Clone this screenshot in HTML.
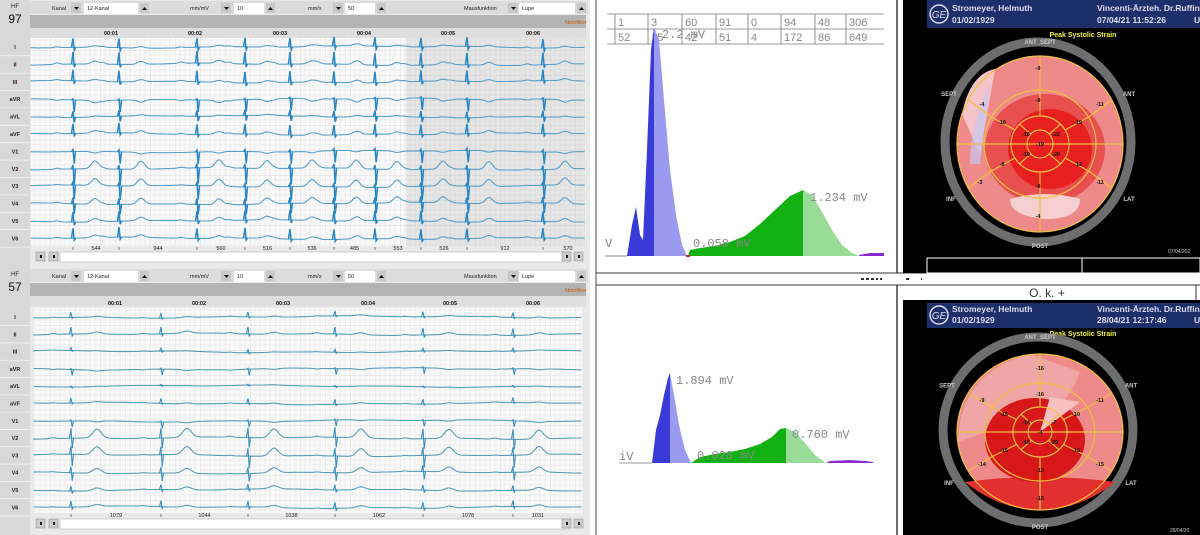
<!DOCTYPE html>
<html><head><meta charset="utf-8">
<style>
html,body{margin:0;padding:0;background:#fff;width:1200px;height:535px;overflow:hidden}
svg{display:block}
text{font-family:"Liberation Sans",sans-serif}
.s{font-size:5.5px;fill:#222}
.m{font-family:"Liberation Mono",monospace;font-size:12px;fill:#888}
.tb{font-family:"Liberation Serif",serif;font-size:11px;fill:#888}
.w{font-size:8.5px;fill:#dde;font-weight:bold}
.lb{font-size:6px;fill:#ccc;font-weight:bold}
.n{font-size:5.5px;fill:#111;font-weight:bold}
</style></head><body>
<svg id="s" width="1200" height="535" viewBox="0 0 1200 535" xmlns="http://www.w3.org/2000/svg">
<defs>
<pattern id="g" width="25" height="25" patternUnits="userSpaceOnUse">
<path d="M5 0V25M10 0V25M15 0V25M20 0V25M0 5H25M0 10H25M0 15H25M0 20H25" stroke="#e4e4e4" stroke-width="0.5"/>
<path d="M0 0V25M0 0H25" stroke="#d2d2d2" stroke-width="0.7"/>
</pattern>
</defs>
<g id="ecg"></g>

<line x1="897" y1="0" x2="897" y2="273" stroke="#222" stroke-width="1.3"/>
<line x1="897" y1="285" x2="897" y2="535" stroke="#222" stroke-width="1.3"/>
<line x1="596" y1="273" x2="1200" y2="273" stroke="#333" stroke-width="1"/>
<line x1="596" y1="285" x2="1200" y2="285" stroke="#333" stroke-width="1"/>
<line x1="1196" y1="285" x2="1196" y2="300" stroke="#333"/>
<line x1="596" y1="0" x2="596" y2="535" stroke="#444" stroke-width="1"/>
<g fill="#333"><rect x="861" y="278" width="3" height="2"/><rect x="866" y="278" width="3" height="2"/><rect x="871" y="278" width="3" height="2"/><rect x="876" y="278" width="2" height="2"/><rect x="880" y="278" width="2" height="2"/><rect x="906" y="278" width="3" height="2"/><rect x="921" y="278" width="1" height="2"/></g>
<text x="1047" y="297" font-size="12" fill="#333" text-anchor="middle" font-family="Liberation Sans">O. k. +</text>

<g stroke="#777" stroke-width="0.8" fill="none">
<path d="M607 14H884M607 29H884M607 44H884"/>
<path d="M615 14V44M648 14V44M682 14V44M716 14V44M748 14V44M781 14V44M815 14V44M846 14V44"/>
</g>
<g class="tb">
<text x="618" y="26">1</text><text x="651" y="26">3</text><text x="685" y="26">60</text><text x="719" y="26">91</text><text x="751" y="26">0</text><text x="784" y="26">94</text><text x="818" y="26">48</text><text x="849" y="26">306</text>
<text x="618" y="41">52</text><text x="651" y="41">15</text><text x="685" y="41">42</text><text x="719" y="41">51</text><text x="751" y="41">4</text><text x="784" y="41">172</text><text x="818" y="41">86</text><text x="849" y="41">649</text>
</g>

<path d="M605 256H627" stroke="#888" stroke-width="1"/>
<path d="M627 256L632 225L636 207L640 235L643 240L647 150L651 50L654 27L654 256Z" fill="#3a3ad8"/>
<path d="M654 27L659 40L664 100L670 170L676 215L682 245L687 256L654 256Z" fill="#9a9af0"/>
<path d="M688 256L690 250L700 248L715 246L730 242L745 236L760 224L775 210L790 196L803 190L803 256Z" fill="#12b012"/>
<path d="M803 190L812 195L822 212L832 230L842 245L852 253L859 256L803 256Z" fill="#98dc98"/>
<path d="M859 255L870 253L884 253L884 256L859 256Z" fill="#8a2ad0"/>
<path d="M686 256H690" stroke="#d02020" stroke-width="2"/>
<text class="m" x="810" y="201">1.234 mV</text>
<text class="m" x="693" y="247">0.058 mV</text>
<text class="m" x="605" y="247">V</text>
<text class="m" x="662" y="38" font-size="10" fill="#aaa">2.2 mV</text>

<path d="M619 463H652" stroke="#999" stroke-width="1"/>
<path d="M652 463L656 430L660 415L664 395L668 378L670 373L670 463Z" fill="#3a3ad8"/>
<path d="M670 373L674 395L679 425L685 450L691 463L670 463Z" fill="#9a9af0"/>
<path d="M691 463L700 457L715 454L730 452L745 449L760 444L772 437L780 429L786 428L786 463Z" fill="#12b012"/>
<path d="M786 428L795 432L805 443L815 455L826 463L786 463Z" fill="#98dc98"/>
<path d="M826 463L830 461L850 460L865 461L873 462L873 463Z" fill="#8a2ad0"/>
<text class="m" x="676" y="384">1.894 mV</text>
<text class="m" x="697" y="459">0.020 mV</text>
<text class="m" x="792" y="438">0.760 mV</text>
<text class="m" x="619" y="460">iV</text>

<rect x="903" y="0" width="297" height="273" fill="#000"/>
<rect x="927" y="0" width="273" height="28" fill="#1c2f6a"/>
<circle cx="939" cy="14" r="9" fill="none" stroke="#dde" stroke-width="1.5"/><text x="939" y="18" font-size="10" fill="#dde" text-anchor="middle" font-style="italic">GE</text>
<text class="w" x="952" y="11">Stromeyer, Helmuth</text><text class="w" x="952" y="23">01/02/1929</text>
<text class="w" x="1097" y="11">Vincenti-Ärzteh. Dr.Ruffin</text><text class="w" x="1097" y="23">07/04/21 11:52:26</text><text class="w" x="1194" y="23">U</text>
<text x="1083" y="37" font-size="7" fill="#f0f040" font-weight="bold" text-anchor="middle">Peak Systolic Strain</text>
<g id="b1"></g>
<text x="1168" y="253" font-size="5" fill="#ccc">07/04/202</text>
<rect x="927" y="258" width="273" height="15" fill="#000" stroke="#fff" stroke-width="1"/>
<line x1="1082" y1="258" x2="1082" y2="273" stroke="#fff"/>

<rect x="903" y="300" width="297" height="235" fill="#000"/>
<rect x="927" y="303" width="273" height="25" fill="#1c2f6a"/>
<circle cx="939" cy="315" r="9" fill="none" stroke="#dde" stroke-width="1.5"/><text x="939" y="319" font-size="10" fill="#dde" text-anchor="middle" font-style="italic">GE</text>
<text class="w" x="952" y="312">Stromeyer, Helmuth</text><text class="w" x="952" y="323">01/02/1929</text>
<text class="w" x="1097" y="312">Vincenti-Ärzteh. Dr.Ruffin</text><text class="w" x="1097" y="323">28/04/21 12:17:46</text><text class="w" x="1194" y="323">U</text>
<text x="1083" y="336" font-size="7" fill="#f0f040" font-weight="bold" text-anchor="middle">Peak Systolic Strain</text>
<g id="b2"></g>
<text x="1170" y="532" font-size="5" fill="#ccc">28/04/20</text>
</svg>
<script>
var NS="http://www.w3.org/2000/svg";
function el(p,t,a,txt){var e=document.createElementNS(NS,t);for(var k in a)e.setAttribute(k,a[k]);if(txt!=null)e.textContent=txt;p.appendChild(e);return e;}
var E=document.getElementById('ecg');
var leads=["I","II","III","aVR","aVL","aVF","V1","V2","V3","V4","V5","V6"];
function panel(o){
 var y0=o.y;
 el(E,'rect',{x:0,y:y0,width:590,height:o.h,fill:'#e9e9e9'});
 el(E,'rect',{x:30,y:y0+1,width:558,height:13,fill:'#dcdcdc'});
 el(E,'rect',{x:30,y:y0+15,width:556,height:13,fill:'#b4b4b4'});
 el(E,'rect',{x:30,y:y0+28,width:556,height:10,fill:'#dedede'});
 el(E,'rect',{x:0,y:y0,width:30,height:o.h,fill:'#d8d8d8'});
 el(E,'text',{x:15,y:y0+8,'font-size':6,'text-anchor':'middle',fill:'#222'},'HF');
 el(E,'text',{x:15,y:y0+23,'font-size':12,'text-anchor':'middle',fill:'#111'},o.hf);
 el(E,'text',{x:565,y:y0+24,'font-size':5.5,fill:'#c06010'},'Netzfilter');
 var tb=[["Kanal",52,71,84,138,140,"12-Kanal"],["mm/mV",190,221,234,264,266,"10"],["mm/s",308,333,345,375,377,"50"],["Mausfunktion",464,508,519,575,577,"Lupe"]];
 tb.forEach(function(t){
  el(E,'text',{x:t[1],y:y0+10,'class':'s'},t[0]);
  el(E,'rect',{x:t[2],y:y0+3,width:10,height:10,fill:'#c8c8c8'});
  el(E,'path',{d:'M'+(t[2]+3)+' '+(y0+7)+'h5l-2.5 3z',fill:'#111'});
  el(E,'rect',{x:t[3],y:y0+3,width:t[4]-t[3],height:11,fill:'#fff'});
  el(E,'text',{x:t[3]+3,y:y0+10,'class':'s'},t[6]);
  el(E,'rect',{x:t[5],y:y0+3,width:9,height:10,fill:'#c8c8c8'});
  el(E,'path',{d:'M'+(t[5]+2)+' '+(y0+10)+'h5l-2.5 -3z',fill:'#111'});
 });
 var gx=o.gx0,gw=o.gx1-o.gx0,gt=y0+o.gt,gh=o.gb-o.gt;
 el(E,'rect',{x:gx,y:gt,width:gw,height:gh,fill:'#fafafa'});
 el(E,'rect',{x:gx,y:gt,width:gw,height:gh,fill:'url(#g)'});
 if(o.shade)el(E,'rect',{x:o.shade,y:gt,width:o.gx1-o.shade,height:gh,fill:'rgba(120,120,120,0.15)'});
 o.times.forEach(function(x,i){el(E,'text',{x:x,y:y0+o.gt-3,'class':'n','text-anchor':'middle'},o.tl[i]);});
 leads.forEach(function(l,i){var ly=y0+o.l0+i*o.ls;
  el(E,'line',{x1:0,x2:30,y1:ly+o.ls/2,y2:ly+o.ls/2,stroke:'#f4f4f4','stroke-width':0.8});
  el(E,'text',{x:15,y:ly+2,'font-size':5.5,'text-anchor':'middle',fill:'#222','font-weight':'bold'},l);});
 leads.forEach(function(l,i){
  var by=y0+o.l0+i*o.ls, P=o.par[i], d='M'+gx+' '+by;
  var beats=o.beats;
  var wob=function(x){return Math.sin(x*0.05+i)*0.5+Math.sin(x*0.013+i*2)*0.8;};
  for(var x=gx;x<=o.gx1;x+=1.5){
   var yy=by+wob(x);
   for(var b=0;b<beats.length;b++){var dx=x-beats[b];
    yy+= -P[3]*Math.exp(-Math.pow((dx+o.pd)/3.5,2));
    yy+= -P[2]*Math.exp(-Math.pow((dx-o.td)/o.tw,2));
   }
   d+='L'+x.toFixed(1)+' '+yy.toFixed(1);
  }
  el(E,'path',{d:d,fill:'none',stroke:o.col,'stroke-width':1.1});
  beats.forEach(function(bx){
   var b0=by+wob(bx);
   var s='M'+(bx-1.5)+' '+b0+'L'+bx+' '+(b0-P[0])+'L'+(bx+1.2)+' '+(b0+P[1])+'L'+(bx+2.5)+' '+b0;
   el(E,'path',{d:s,fill:'none',stroke:o.sc,'stroke-width':o.sw});
  });
 });
 el(E,'rect',{x:gx,y:y0+o.gb,width:gw,height:4,fill:'#e9e9e9'});
 o.beats.forEach(function(bx,i){el(E,'line',{x1:bx,x2:bx,y1:y0+o.gb+1,y2:y0+o.gb+4,stroke:'#333','stroke-width':0.6});
  var nx=i<o.beats.length-1?(bx+o.beats[i+1])/2:bx+25;
  el(E,'text',{x:nx,y:y0+o.gb+4,'class':'s','text-anchor':'middle'},o.rr[i]);});
 var sy=y0+o.gb+6;
 el(E,'rect',{x:36,y:sy,width:9,height:9,fill:'#ccc',stroke:'#888','stroke-width':0.5});
 el(E,'rect',{x:49,y:sy,width:9,height:9,fill:'#ccc',stroke:'#888','stroke-width':0.5});
 el(E,'rect',{x:60,y:sy,width:510,height:10,fill:'#fff',stroke:'#aaa','stroke-width':0.5});
 el(E,'rect',{x:562,y:sy,width:9,height:9,fill:'#ccc',stroke:'#888','stroke-width':0.5});
 el(E,'rect',{x:574,y:sy,width:9,height:9,fill:'#ccc',stroke:'#888','stroke-width':0.5});
 [40,53,566,578].forEach(function(x){el(E,'rect',{x:x,y:sy+3,width:2,height:3,fill:'#111'});});
}
panel({y:0,h:268,hf:"97",gx0:31,gx1:585,gt:38,gb:246,l0:47,ls:17.4,shade:406,col:'#5aa0c8',sc:'#2a86c4',sw:1.5,pd:16,td:22,tw:5,
 beats:[73,119,197,245,290,334,375,421,467,543],
 times:[111,195,280,364,448,533],tl:["00:01","00:02","00:03","00:04","00:05","00:06"],
 rr:["544","944","560","516","536","485","553","526","912","570"],
 par:[[9,3,1.5,0.8],[12,3,3,1.5],[11,3,2,1],[1,12,-2.5,-1],[6,5,1,0.5],[10,2,2.5,1],[2,12,-1.5,0],[4,16,8,1],[3,14,7,0.5],[6,10,6,1],[10,3,3.5,1],[10,2,2.5,1]]});
panel({y:268,h:267,hf:"57",gx0:34,gx1:582,gt:40,gb:245,l0:49,ls:17.3,shade:0,col:'#5a9fb4',sc:'#3a90c0',sw:1.1,pd:18,td:26,tw:6,
 beats:[71,161,248,335,423,513],
 times:[115,199,283,368,450,533],tl:["00:01","00:02","00:03","00:04","00:05","00:06"],
 rr:["1079","1044","1038","1062","1078","1031"],
 par:[[5,1,1,0.5],[7,2,2,1],[3,1,0.5,0.3],[1,6,-1,-0.5],[1,1,0.3,0],[5,1,1,0.5],[1,6,-1,0],[10,10,9,1],[8,12,8,0.5],[6,8,5,0.5],[5,2,3,0.5],[6,2,2,0.5]]});

function bull(id,cx,cy,gr,rr,r2,r3,r4,vals,variant){
 var g=document.getElementById(id);
 el(g,'ellipse',{cx:cx-2,cy:cy-2,rx:gr[0],ry:gr[1],fill:'none',stroke:'#6e6e6e','stroke-width':9});
 el(g,'ellipse',{cx:cx,cy:cy,rx:rr[0],ry:rr[1],fill:'#ef8a8a'});
 if(variant==1){
  el(g,'path',{d:'M'+(cx-78)+' '+(cy-30)+'Q'+(cx-70)+' '+(cy-70)+' '+(cx-45)+' '+(cy-75)+'L'+(cx-60)+' '+(cy+10)+'Z',fill:'#f4c4c8'});
  el(g,'path',{d:'M'+(cx-50)+' '+(cy-60)+'Q'+(cx-70)+' '+(cy-20)+' '+(cx-70)+' '+(cy+20)+'L'+(cx-60)+' '+(cy+20)+'Z',fill:'#c8c8f0',opacity:0.7});
  el(g,'ellipse',{cx:cx+5,cy:cy+5,rx:60,ry:55,fill:'#e85050'});
  el(g,'path',{d:'M'+(cx-30)+' '+(cy+55)+'Q'+(cx+5)+' '+(cy+45)+' '+(cx+40)+' '+(cy+55)+'Q'+(cx+40)+' '+(cy+75)+' '+(cx+5)+' '+(cy+75)+'Q'+(cx-30)+' '+(cy+72)+' '+(cx-30)+' '+(cy+55)+'Z',fill:'#f6d0d0'});
  el(g,'ellipse',{cx:cx+10,cy:cy+5,rx:42,ry:40,fill:'#e82020'});
 }else{
  el(g,'path',{d:'M'+(cx-82)+' '+(cy+10)+'Q'+(cx-80)+' '+(cy-60)+' '+(cx-10)+' '+(cy-78)+'L'+(cx+40)+' '+(cy-60)+'Q'+(cx+20)+' '+(cy-5)+' '+(cx-40)+' '+(cy-5)+'Z',fill:'#f0a6a6'});
  el(g,'path',{d:'M'+(cx-75)+' '+(cy+50)+'Q'+(cx)+' '+(cy+40)+' '+(cx+75)+' '+(cy+50)+'Q'+(cx+40)+' '+(cy+78)+' '+(cx)+' '+(cy+78)+'Q'+(cx-40)+' '+(cy+78)+' '+(cx-75)+' '+(cy+50)+'Z',fill:'#e23030'});
  el(g,'ellipse',{cx:cx-5,cy:cy+8,rx:50,ry:42,fill:'#d81818'});
  el(g,'path',{d:'M'+cx+' '+cy+'L'+(cx+40)+' '+(cy-30)+'L'+(cx+10)+' '+(cy-35)+'Z',fill:'#f6c0c0'});
 }
 var ys='#f0c040';
 [r2,r3,r4].forEach(function(r){el(g,'ellipse',{cx:cx,cy:cy,rx:r[0],ry:r[1],fill:'none',stroke:ys,'stroke-width':1.2});});
 el(g,'ellipse',{cx:cx,cy:cy,rx:rr[0],ry:rr[1],fill:'none',stroke:ys,'stroke-width':1.2});
 el(g,'line',{x1:cx-rr[0],x2:cx+rr[0],y1:cy,y2:cy,stroke:ys,'stroke-width':1.2});
 [30,90,150,210,270,330].forEach(function(a){var t=a*Math.PI/180;
  el(g,'line',{x1:cx+r2[0]*Math.cos(t),y1:cy+r2[1]*Math.sin(t),x2:cx+rr[0]*Math.cos(t),y2:cy+rr[1]*Math.sin(t),stroke:ys,'stroke-width':1.2});
  el(g,'line',{x1:cx+r3[0]*Math.cos(t),y1:cy+r3[1]*Math.sin(t),x2:cx+r2[0]*Math.cos(t),y2:cy+r2[1]*Math.sin(t),stroke:ys,'stroke-width':1.2});});
 [45,135,225,315].forEach(function(a){var t=a*Math.PI/180;
  el(g,'line',{x1:cx+r4[0]*Math.cos(t),y1:cy+r4[1]*Math.sin(t),x2:cx+r3[0]*Math.cos(t),y2:cy+r3[1]*Math.sin(t),stroke:ys,'stroke-width':1.2});});
 var L=[["ANT_SEPT",0,-gr[1]-2],["SEPT",-gr[0]+2,-gr[1]*0.5],["ANT",gr[0]-4,-gr[1]*0.5],["INF",-gr[0]+4,gr[1]*0.55],["LAT",gr[0]-4,gr[1]*0.55],["POST",0,gr[1]+2]];
 L.forEach(function(l){el(g,'text',{x:cx+l[1],y:cy+l[2]+2,'class':'lb','text-anchor':'middle'},l[0]);});
 vals.forEach(function(v){el(g,'text',{x:cx+v[1],y:cy+v[2]+2,'class':'n','text-anchor':'middle'},v[0]);});
}
bull('b1',1040,144,[93,100],[83,88],[56,54],[29,28],[13,14],
 [["-9",-2,-76],["-11",60,-40],["-11",60,38],["-4",-2,72],["-3",-60,38],["-4",-58,-40],["-9",-2,-44],["-19",38,-22],["-13",38,20],["-9",-2,42],["-8",-38,20],["-16",-38,-22],["-22",16,-10],["-20",16,10],["-19",-14,10],["-16",-14,-10],["-19",0,0]],1);
bull('b2',1040,432,[95,93],[83,78],[55,49],[27,25],[12,12],
 [["-16",0,-64],["-11",60,-32],["-15",60,32],["-16",0,66],["-14",-58,32],["-9",-58,-32],["-16",0,-38],["-10",36,-18],["-13",36,18],["-13",0,38],["-15",-36,18],["-15",-36,-18],["-7",14,-10],["-29",14,10],["-19",-14,10],["-14",-14,-10],["-4",0,0]],2);
</script>
</body></html>
